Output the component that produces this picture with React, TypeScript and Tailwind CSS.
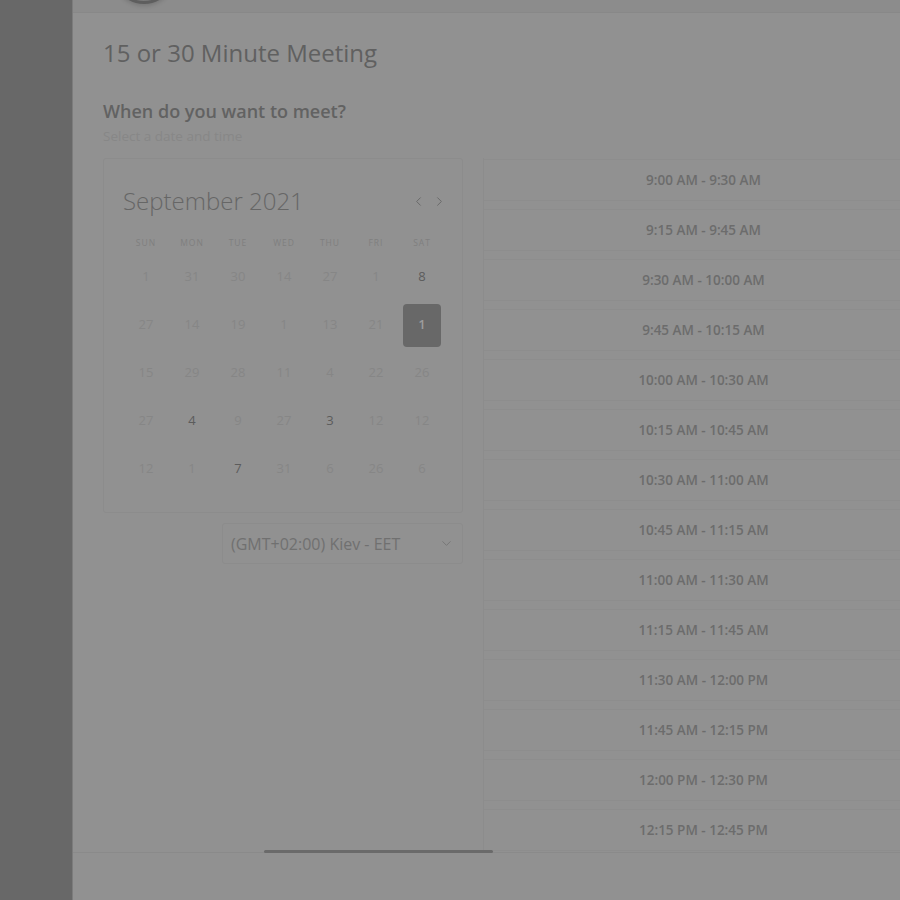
import { ChevronLeft, ChevronRight, ChevronDown } from "lucide-react";

const days = ["SUN", "MON", "TUE", "WED", "THU", "FRI", "SAT"];

// [label, active]
const weeks: [string, boolean][][] = [
  [["1", false], ["31", false], ["30", false], ["14", false], ["27", false], ["1", false], ["8", true]],
  [["27", false], ["14", false], ["19", false], ["1", false], ["13", false], ["21", false], ["1", true]],
  [["15", false], ["29", false], ["28", false], ["11", false], ["4", false], ["22", false], ["26", false]],
  [["27", false], ["4", true], ["9", false], ["27", false], ["3", true], ["12", false], ["12", false]],
  [["12", false], ["1", false], ["7", true], ["31", false], ["6", false], ["26", false], ["6", false]],
];

const slots = [
  "9:00 AM - 9:30 AM",
  "9:15 AM - 9:45 AM",
  "9:30 AM - 10:00 AM",
  "9:45 AM - 10:15 AM",
  "10:00 AM - 10:30 AM",
  "10:15 AM - 10:45 AM",
  "10:30 AM - 11:00 AM",
  "10:45 AM - 11:15 AM",
  "11:00 AM - 11:30 AM",
  "11:15 AM - 11:45 AM",
  "11:30 AM - 12:00 PM",
  "11:45 AM - 12:15 PM",
  "12:00 PM - 12:30 PM",
  "12:15 PM - 12:45 PM",
];

function Calendar() {
  return (
    <div className="border border-[#8c8c8c] rounded-[3px] pt-[26px] pb-[19px] px-[19px]">
      <div className="flex items-center justify-between h-[32px]">
        <span className="text-[24px] font-light text-[#666666] leading-[32px]">September 2021</span>
        <div className="flex items-center gap-[6px] text-[#6a6a6a] mr-[-4px]">
          <ChevronLeft size={15} strokeWidth={1.6} />
          <ChevronRight size={15} strokeWidth={1.6} />
        </div>
      </div>
      <div className="grid grid-cols-7 w-[322px] mt-[16px] h-[20px] items-center">
        {days.map(d => (
          <span key={d} className="text-center text-[8.5px] tracking-[1px] text-[#7f7f7f]">{d}</span>
        ))}
      </div>
      <div className="w-[322px]">
        {weeks.map((w, i) => (
          <div key={i} className="grid grid-cols-7 h-[48px]">
            {w.map(([n, active], j) => {
              const selected = i === 1 && j === 6;
              return (
                <div key={j} className="flex items-center justify-center">
                  {selected ? (
                    <span className="w-[38px] h-[43px] rounded-[4px] bg-[#686868] flex items-center justify-center text-[13px] font-semibold text-[#9c9c9c]">{n}</span>
                  ) : (
                    <span className={active ? "text-[13px] text-[#5c5c5c]" : "text-[13px] text-[#868686]"}>{n}</span>
                  )}
                </div>
              );
            })}
          </div>
        ))}
      </div>
    </div>
  );
}

export default function App() {
  return (
    <div className="flex w-[900px] h-[900px] overflow-hidden bg-[#919191]" style={{ fontFamily: '"Open Sans", "Noto Sans", sans-serif' }}>
      <aside className="w-[73px] shrink-0 bg-[#686868] border-r border-[#7c7c7c]" />
      <main className="flex-1 flex flex-col min-w-0">
        <header className="relative h-[13px] shrink-0 bg-[#8c8c8c] border-b border-[#888888]">
          <div className="absolute left-[40px] top-[-58px] w-[62px] h-[62px] rounded-full bg-[#7a7a7a] border-[3px] border-[#5e5e5e] shadow-[0_2px_4px_rgba(0,0,0,0.15)]" />
        </header>
        <div className="flex-1 min-h-0 flex flex-col pl-[30px] pt-[24px] border-b border-[#8a8a8a]">
          <h1 className="text-[24px] leading-[32px] text-[#606060]">15 or 30 Minute Meeting</h1>
          <h2 className="mt-[30px] text-[18px] leading-[24px] font-semibold text-[#626262]">When do you want to meet?</h2>
          <p className="text-[13.5px] leading-[20px] text-[#878787] mt-[3px]">Select a date and time</p>
          <div className="flex gap-[20px] mt-[12px] min-h-0 flex-1">
            <div className="w-[360px] shrink-0 flex flex-col">
              <Calendar />
              <div className="ml-auto mt-[10px] w-[241px] h-[41px] border border-[#8c8c8c] rounded-[3px] flex items-center justify-between pl-[8px] pr-[8px]">
                <span className="text-[16px] text-[#707070]">(GMT+02:00) Kiev - EET</span>
                <ChevronDown size={15} strokeWidth={1.4} className="text-[#747474]" />
              </div>
            </div>
            <div className="w-[440px] shrink-0 flex flex-col gap-[8px] pt-[1px] border-l border-[#8c8c8c] overflow-hidden">
              {slots.map(s => (
                <div key={s} className="h-[42px] shrink-0 border-y border-[#8d8d8d] flex items-center justify-center">
                  <span className="text-[13.5px] font-semibold text-[#6c6c6c]">{s}</span>
                </div>
              ))}
            </div>
          </div>
        </div>
        <div className="relative h-[47px] shrink-0">
          <div className="absolute left-[191px] top-[-3px] w-[229px] h-[3px] rounded-full bg-[#6a6a6a]" />
        </div>
      </main>
    </div>
  );
}
